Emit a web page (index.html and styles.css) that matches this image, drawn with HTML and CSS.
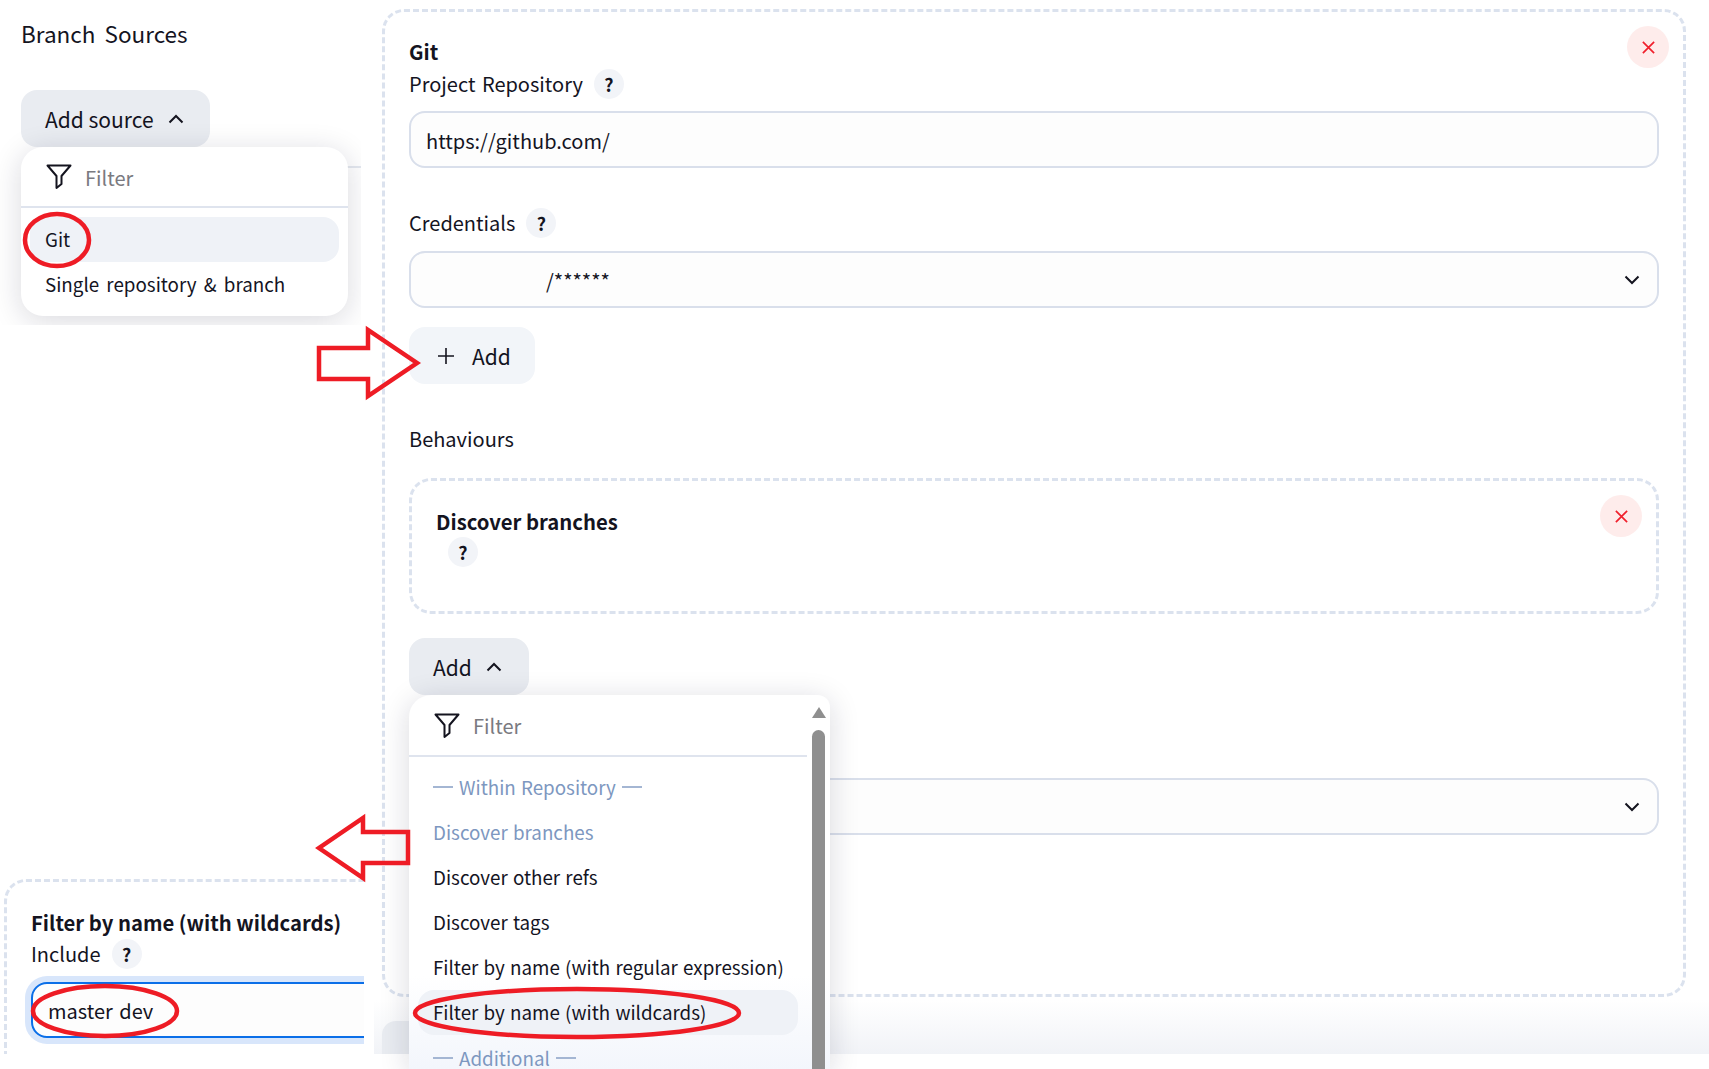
FILE: index.html
```html
<!DOCTYPE html>
<html lang="en">
<head>
    <meta charset="UTF-8">
    <title>Branch Sources</title>
    <link rel="stylesheet" href="styles.css">
</head>
<body>

    <div class="page">
        <!-- Left column: two cropped pieces of the config page -->
        <div class="left">
            <section class="source-patch">
                <h2 class="section-title">Branch Sources</h2>
                <button class="btn btn-open btn-source">Add source
                    <svg class="chevron" viewBox="0 0 16 16"><path d="M1.500 11.500 8 5l6.500 6.500"/></svg>
                </button>
                <div class="rule"></div>
                <div class="menu menu-source">
                    <div class="menu-filter">
                        <svg class="funnel" viewBox="0 0 26 26"><path d="M1.500 1.500h23l-9 10.500v8l-5 4V12z"/></svg>
                        <span>Filter</span>
                    </div>
                    <div class="menu-items">
                        <div class="menu-item active">Git</div>
                        <div class="menu-item">Single repository &amp; branch</div>
                    </div>
                </div>
            </section>

            <section class="filter-patch">
                <div class="filter-box">
                    <div class="bold-title">Filter by name (with wildcards)</div>
                    <div class="label-row">Include <span class="help">?</span></div>
                    <div class="field field-focus">master dev</div>
                </div>
            </section>
        </div>

        <!-- Main form -->
        <main class="main">
            <div class="git-box">
                <button class="close close-git"><svg viewBox="0 0 16 16"><path d="M2 2l12 12M14 2L2 14"/></svg></button>
                <div class="bold-title">Git</div>
                <div class="label-row label-project">Project Repository <span class="help">?</span></div>
                <div class="field field-url">https://github.com/</div>

                <div class="label-row label-cred">Credentials <span class="help">?</span></div>
                <div class="field field-select cred-value">/******
                    <svg class="chevron chevron-select" viewBox="0 0 16 16"><path d="M1.500 4.500 8 11l6.500-6.500"/></svg>
                </div>
                <button class="btn btn-plus">
                    <svg class="plus" viewBox="0 0 18 18"><path d="M9 1v16M1 9h16"/></svg>
                    Add
                </button>

                <div class="label-behaviours">Behaviours</div>
                <div class="behaviour-box">
                    <button class="close close-behaviour"><svg viewBox="0 0 16 16"><path d="M2 2l12 12M14 2L2 14"/></svg></button>
                    <div class="bold-title">Discover branches</div>
                    <span class="help help-behaviour">?</span>
                </div>

                <button class="btn btn-open btn-behaviour">Add
                    <svg class="chevron" viewBox="0 0 16 16"><path d="M1.500 11.500 8 5l6.500 6.500"/></svg>
                </button>
                <div class="field field-select field-second">
                    <svg class="chevron chevron-select" viewBox="0 0 16 16"><path d="M1.500 4.500 8 11l6.500-6.500"/></svg>
                </div>
            </div>
            <div class="bottom-band"><div class="band-btn"></div></div>
        </main>

        <!-- Open dropdown over the form -->
        <div class="menu menu-behaviour">
            <div class="menu-list">
                <div class="menu-filter">
                    <svg class="funnel" viewBox="0 0 26 26"><path d="M1.500 1.500h23l-9 10.500v8l-5 4V12z"/></svg>
                    <span>Filter</span>
                </div>
                <div class="menu-items">
                    <div class="menu-head"><i></i>Within Repository<i></i></div>
                    <div class="menu-item muted">Discover branches</div>
                    <div class="menu-item">Discover other refs</div>
                    <div class="menu-item">Discover tags</div>
                    <div class="menu-item">Filter by name (with regular expression)</div>
                    <div class="menu-item active">Filter by name (with wildcards)</div>
                    <div class="menu-head menu-head-last"><i></i>Additional<i></i></div>
                </div>
            </div>
            <div class="scrollbar">
                <div class="scroll-up"></div>
                <div class="scroll-thumb"></div>
            </div>
        </div>

        <!-- Red marks drawn on the screenshot -->
        <svg class="marks" viewBox="0 0 1709 1069">
            <ellipse cx="57" cy="240" rx="32" ry="26"/>
            <ellipse cx="105" cy="1011" rx="72" ry="25"/>
            <ellipse cx="577" cy="1013" rx="162" ry="24"/>
            <path d="M319 348h49v-18l49 33-49 33v-17h-49z"/>
            <path d="M408 832h-45v-14l-44 30 44 30v-15h45z"/>
        </svg>
    </div>

</body>
</html>
```

FILE: styles.css
```css
/* General */
* {
    box-sizing: border-box;
}

body {
    margin: 0;
    background-color: #ffffff;
    color: #14141f;
    font-family: "Noto Sans CJK KR", "Noto Sans", sans-serif;
    font-size: 20px;
}

.page {
    position: relative;
    display: flex;
    width: 1709px;
    height: 1069px;
    overflow: hidden;
    background-color: #ffffff;
}

button {
    font: inherit;
    color: inherit;
    border: none;
}

/* Left column */
.left {
    width: 382px;
    flex: none;
}

.source-patch {
    position: relative;
    width: 361px;
    height: 325px;
    overflow: hidden;
    padding: 18px 0 0 21px;
}

.section-title {
    margin: 0;
    font-size: 22.500px;
    font-weight: 400;
    line-height: 30px;
    word-spacing: 4px;
}

.btn {
    display: flex;
    align-items: center;
    border-radius: 16px;
    font-size: 21px;
}

.btn-open {
    background-color: #e9ecf1;
    gap: 14px;
}

.btn-source {
    width: 189px;
    height: 57px;
    margin-top: 42px;
    padding: 0 24px;
}

.rule {
    height: 2px;
    margin: -2px -21px 0 0;
    margin-left: 189px;
    background-color: #e4e8ef;
    transform: translateY(21px);
}

.chevron {
    width: 16px;
    height: 16px;
    fill: none;
    stroke: #14141f;
    stroke-width: 2;
}

/* Dropdown menus */
.menu {
    position: absolute;
    background-color: #ffffff;
    box-shadow: 0 5px 30px rgba(20, 20, 50, 0.16);
    font-size: 18.800px;
    word-spacing: 1px;
}

.menu-source {
    left: 21px;
    top: 147px;
    width: 327px;
    height: 169px;
    border-radius: 22px;
    word-spacing: 3px;
}

.menu-behaviour {
    left: 409px;
    top: 695px;
    width: 421px;
    height: 374px;
    display: flex;
    border-radius: 22px 12px 0 0;
    background-image: linear-gradient(#ffffff 75%, #f3f6fc);
}

.menu-list {
    flex: 1;
    min-width: 0;
}

.menu-filter {
    display: flex;
    align-items: center;
    gap: 13px;
    height: 62px;
    padding-left: 25px;
    padding-top: 1px;
    border-bottom: 2px solid #dfe4ee;
    color: #7a7a80;
    font-size: 20px;
}

.menu-source .menu-filter {
    height: 61px;
}

.menu-source .menu-items {
    padding-top: 9px;
}

.funnel {
    width: 26px;
    height: 26px;
    fill: none;
    stroke: #14141f;
    stroke-width: 2;
    stroke-linejoin: round;
}

.menu-items {
    padding: 8px 9px 0;
}

.menu-item,
.menu-head {
    display: flex;
    align-items: center;
    height: 45px;
    padding-left: 15px;
    padding-bottom: 2px;
    white-space: nowrap;
}

.menu-item.active {
    background-color: #eff2f7;
    border-radius: 16px;
}

.menu-item.muted,
.menu-head {
    color: #7d97c0;
}

.menu-head {
    gap: 6px;
}

.menu-head-last {
    height: 34px;
    padding-top: 12px;
    padding-bottom: 0;
    line-height: 22px;
}

.menu-head i {
    display: block;
    width: 20px;
    height: 2px;
    background-color: #a4b6d3;
}

.scrollbar {
    display: flex;
    flex-direction: column;
    align-items: center;
    flex: none;
    width: 23px;
    padding-top: 12px;
}

.scroll-up {
    width: 0;
    height: 0;
    border-left: 7px solid transparent;
    border-right: 7px solid transparent;
    border-bottom: 11px solid #8f8f8f;
}

.scroll-thumb {
    width: 13px;
    height: 340px;
    margin-top: 12px;
    border-radius: 7px 7px 0 0;
    background-color: #8f8f8f;
}

/* Form pieces */
.bold-title {
    font-size: 20.300px;
    font-weight: 700;
    line-height: 28px;
    word-spacing: 0;
}

.label-row {
    display: flex;
    align-items: center;
    gap: 11px;
    line-height: 32px;
    word-spacing: 2px;
}

.help {
    display: flex;
    align-items: center;
    justify-content: center;
    width: 30px;
    height: 30px;
    border-radius: 50%;
    background-color: #f2f4f8;
    font-size: 18px;
    font-weight: 700;
}

.field {
    position: relative;
    display: flex;
    align-items: center;
    width: 100%;
    height: 57px;
    padding: 1px 15px 0;
    border: 2px solid #d9dfeb;
    border-radius: 16px;
    background-color: #fdfdfd;
    word-spacing: 2px;
}

.field-select .chevron-select {
    position: absolute;
    right: 17px;
    top: 19px;
}

/* Filter by name piece */
.filter-patch {
    width: 364px;
    height: 175px;
    margin-top: 554px;
    overflow: hidden;
}

.filter-box {
    width: 420px;
    height: 200px;
    margin-left: 4px;
    padding: 26px 0 0 24px;
    border: 3px dashed #dbe2ee;
    border-radius: 22px;
}

.filter-box .label-row {
    margin-top: 2px;
}

.field-focus {
    width: 360px;
    height: 56px;
    margin-top: 12px;
    border: 2px solid #0b6fe8;
    box-shadow: 0 0 0 6px #d8e6fb;
    padding-left: 15px;
}

/* Main form */
.main {
    position: relative;
    flex: 1;
    min-width: 0;
}

.git-box {
    position: relative;
    width: 1304px;
    height: 988px;
    margin-top: 9px;
    padding: 25px 24px 0 24px;
    border: 3px dashed #dbe2ee;
    border-radius: 22px;
}

.close {
    position: absolute;
    display: flex;
    align-items: center;
    justify-content: center;
    width: 42px;
    height: 42px;
    padding: 0;
    border-radius: 50%;
    background-color: #feeceb;
}

.close svg {
    width: 15px;
    height: 15px;
    fill: none;
    stroke: #f0202c;
    stroke-width: 1.800;
}

.close-git {
    top: 14px;
    right: 14px;
}

.close-behaviour {
    top: 14px;
    right: 14px;
}

.label-project {
    margin-top: 3px;
}

.field-url {
    margin-top: 11px;
}

.label-cred {
    margin-top: 39px;
}

.cred-value {
    margin-top: 12px;
    padding-left: 135px;
}

.btn-plus {
    width: 126px;
    height: 57px;
    margin-top: 19px;
    padding: 0 0 0 28px;
    gap: 17px;
    background-color: #f2f5f9;
}

.plus {
    width: 18px;
    height: 18px;
    fill: none;
    stroke: #14141f;
    stroke-width: 1.600;
}

.label-behaviours {
    margin-top: 40px;
    line-height: 30px;
}

.behaviour-box {
    position: relative;
    height: 136px;
    margin-top: 24px;
    padding: 26px 0 0 24px;
    border: 3px dashed #dbe2ee;
    border-radius: 22px;
}

.help-behaviour {
    margin: 2px 0 0 12px;
}

.btn-behaviour {
    width: 120px;
    height: 57px;
    margin-top: 24px;
    padding: 0 24px;
}

.field-second {
    margin-top: 83px;
}

.bottom-band {
    position: absolute;
    left: -8px;
    top: 1000px;
    width: 1335px;
    height: 54px;
    padding-left: 8px;
    background-image: linear-gradient(rgba(241, 243, 247, 0), #f1f3f7);
}

.band-btn {
    width: 40px;
    height: 33px;
    margin-top: 21px;
    border-radius: 14px 0 0 0;
    background-color: #e9ecf1;
}

/* Annotations */
.marks {
    position: absolute;
    left: 0;
    top: 0;
    width: 1709px;
    height: 1069px;
    fill: none;
    stroke: #ee1c25;
    stroke-width: 4.500;
    pointer-events: none;
}
```
